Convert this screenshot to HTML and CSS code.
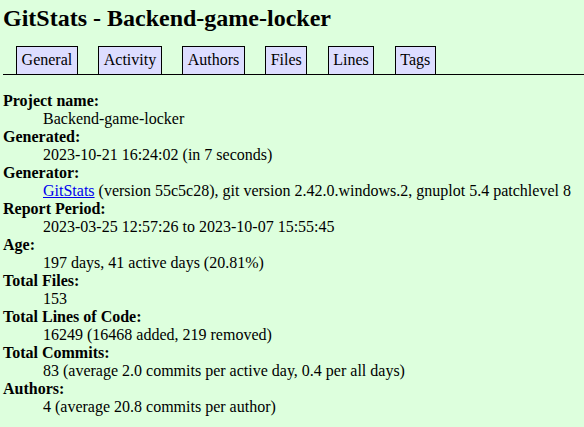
FILE: index.html
```html
<!DOCTYPE html>
<html>
<head>
<meta charset="utf-8">
<title>GitStats - Backend-game-locker</title>
<link rel="stylesheet" href="styles.css">
</head>
<body>
<h1 class="title">GitStats - Backend-game-locker</h1>
<ul class="nav">
  <li><a href="#">General</a></li>
  <li><a href="#">Activity</a></li>
  <li><a href="#">Authors</a></li>
  <li><a href="#">Files</a></li>
  <li><a href="#">Lines</a></li>
  <li><a href="#">Tags</a></li>
</ul>
<dl class="info">
  <dt>Project name:</dt><dd>Backend-game-locker</dd>
  <dt>Generated:</dt><dd>2023-10-21 16:24:02 (in 7 seconds)</dd>
  <dt>Generator:</dt><dd><a class="link" href="#">GitStats</a> (version 55c5c28), git version 2.42.0.windows.2, gnuplot 5.4 patchlevel 8</dd>
  <dt>Report Period:</dt><dd>2023-03-25 12:57:26 to 2023-10-07 15:55:45</dd>
  <dt>Age:</dt><dd>197 days, 41 active days (20.81%)</dd>
  <dt>Total Files:</dt><dd>153</dd>
  <dt>Total Lines of Code:</dt><dd>16249 (16468 added, 219 removed)</dd>
  <dt>Total Commits:</dt><dd>83 (average 2.0 commits per active day, 0.4 per all days)</dd>
  <dt>Authors:</dt><dd>4 (average 20.8 commits per author)</dd>
</dl>
</body>
</html>
```
FILE: styles.css
```css
html, body {
  margin: 0;
  padding: 0;
}
body {
  background-color: #dfd;
  color: black;
  font-family: "Liberation Serif", "Times New Roman", serif;
  font-size: 16px;
  line-height: 18px;
  padding-left: 3px;
  overflow: hidden;
}
.title {
  font-size: 24px;
  font-weight: bold;
  line-height: 28px;
  margin: 4px 0 14px 0;
  white-space: nowrap;
}
.nav {
  display: flex;
  gap: 20.3px;
  list-style: none;
  margin: 0;
  padding: 0 0 0 13px;
  border-bottom: 1px solid black;
}
.nav li {
  display: block;
}
.nav a {
  display: block;
  padding: 4px 4.6px 5px 4.6px;
  border: 1px solid black;
  border-bottom: none;
  background-color: #ddf;
  color: black;
  text-decoration: none;
  white-space: nowrap;
}
.info {
  margin: 17px 0 0 0;
}
.info dt {
  font-weight: bold;
}
.info dd {
  margin-left: 40px;
  white-space: nowrap;
}
.link {
  color: #00e;
  text-decoration: underline;
}
```
